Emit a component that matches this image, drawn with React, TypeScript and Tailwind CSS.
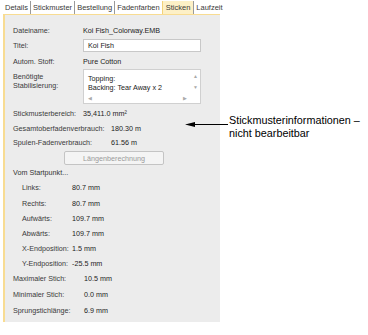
const tabs = ["Details", "Stickmuster", "Bestellung", "Fadenfarben", "Sticken", "Laufzeit"];

const Row = ({ label, value, h, lw, indent }: { label: string; value: string; h: string; lw: string; indent?: boolean }) => (
    <div className={`flex items-center ${h} ${indent ? "pl-[9px]" : ""}`}>
        <div className={`${lw} shrink-0 text-[#3a3a3a]`}>{label}</div>
        <div className="text-[#222]">{value}</div>
    </div>
);

const App = () => {
    return (
        <div className="relative w-[368px] h-[335px] bg-white overflow-hidden" style={{ fontFamily: '"Liberation Sans", Arial, sans-serif' }}>
            <div className="ml-[3px] w-[217px] text-[7.5px] leading-[9px]">
                {/* tab bar */}
                <div className="flex items-stretch h-[14px] pt-[1px]">
                    {tabs.map((t, i) => (
                        <div
                            key={t}
                            className={`flex items-center px-[2px] ${i > 0 ? "border-l border-[#9a9a9a]" : ""} ${t === "Sticken" ? "bg-[#fdf0c6] border-[#f3d27a] px-[3px]" : ""} text-[#3a3a3a]`}
                        >
                            {t}
                        </div>
                    ))}
                </div>
                {/* panel */}
                <div className="h-[308px] bg-[#ececec] border-l-2 border-t border-[#f8dc92] pl-[8px] pt-[8px] text-[7.2px]">
                    <Row label="Dateiname:" value="Koi Fish_Colorway.EMB" h="h-[14px]" lw="w-[70px]" />
                    <div className="flex items-center h-[17px]">
                        <div className="w-[70px] shrink-0 text-[#3a3a3a]">Titel:</div>
                        <div className="w-[118px] h-[13px] bg-white border border-[#c8c8c8] flex items-center pl-[4px] text-[#222]">Koi Fish</div>
                    </div>
                    <Row label="Autom. Stoff:" value="Pure Cotton" h="h-[14px]" lw="w-[70px]" />
                    <div className="flex mt-[1px] h-[35px]">
                        <div className="w-[70px] shrink-0 text-[#3a3a3a] pt-[3px]">
                            Benötigte<br />Stabilisierung:
                        </div>
                        <div className="w-[118px] h-[35px] bg-white border border-[#d0d0d0] flex flex-col">
                            <div className="flex flex-1">
                                <div className="flex-1 pl-[4px] pt-[4px] text-[#222]">
                                    Topping:<br />Backing: Tear Away x 2
                                </div>
                                <div className="w-[9px] flex flex-col items-center justify-between py-[4px] text-[5px] text-[#aaa] leading-none">
                                    <span>▲</span>
                                    <span>▼</span>
                                </div>
                            </div>
                            <div className="h-[9px] flex items-center justify-between px-[4px] mr-[9px] text-[5px] text-[#aaa] leading-none">
                                <span>◀</span>
                                <span>▶</span>
                            </div>
                        </div>
                    </div>
                    <Row label="Stickmusterbereich:" value="35,411.0 mm²" h="h-[15px] mt-[2px]" lw="w-[70px]" />
                    <Row label="Gesamtoberfadenverbrauch:" value="180.30 m" h="h-[14px]" lw="w-[98px]" />
                    <Row label="Spulen-Fadenverbrauch:" value="61.56 m" h="h-[14px]" lw="w-[98px]" />
                    <div className="ml-[51px] mt-[2px] w-[100px] h-[14px] border border-[#c4c4c4] rounded-[2px] bg-[#f4f4f4] flex items-center justify-center text-[#9a9a9a]">
                        Längenberechnung
                    </div>
                    <div className="flex items-center h-[15px] text-[#333]">Vom Startpunkt...</div>
                    <Row indent label="Links:" value="80.7 mm" h="h-[15px]" lw="w-[50px]" />
                    <Row indent label="Rechts:" value="80.7 mm" h="h-[16px]" lw="w-[50px]" />
                    <Row indent label="Aufwärts:" value="109.7 mm" h="h-[15px]" lw="w-[50px]" />
                    <Row indent label="Abwärts:" value="109.7 mm" h="h-[15px]" lw="w-[50px]" />
                    <Row indent label="X-Endposition:" value="1.5 mm" h="h-[15px]" lw="w-[50px]" />
                    <Row indent label="Y-Endposition:" value="-25.5 mm" h="h-[15px]" lw="w-[50px]" />
                    <Row label="Maximaler Stich:" value="10.5 mm" h="h-[15px]" lw="w-[71px]" />
                    <Row label="Minimaler Stich:" value="0.0 mm" h="h-[16px]" lw="w-[71px]" />
                    <Row label="Sprungstichlänge:" value="6.9 mm" h="h-[17px]" lw="w-[71px]" />
                </div>
            </div>
            {/* callout */}
            <svg className="absolute left-[184px] top-[120px]" width="46" height="9" viewBox="0 0 46 9">
                <path d="M1 4.5 L11 2 L11 7 Z" fill="#000" />
                <line x1="10" y1="4.5" x2="44" y2="4.5" stroke="#000" strokeWidth="1" />
            </svg>
            <div className="absolute left-[229px] top-[114px] text-[10.8px] leading-[13px] text-black">
                Stickmusterinformationen –<br />nicht bearbeitbar
            </div>
        </div>
    );
};

export default App;
